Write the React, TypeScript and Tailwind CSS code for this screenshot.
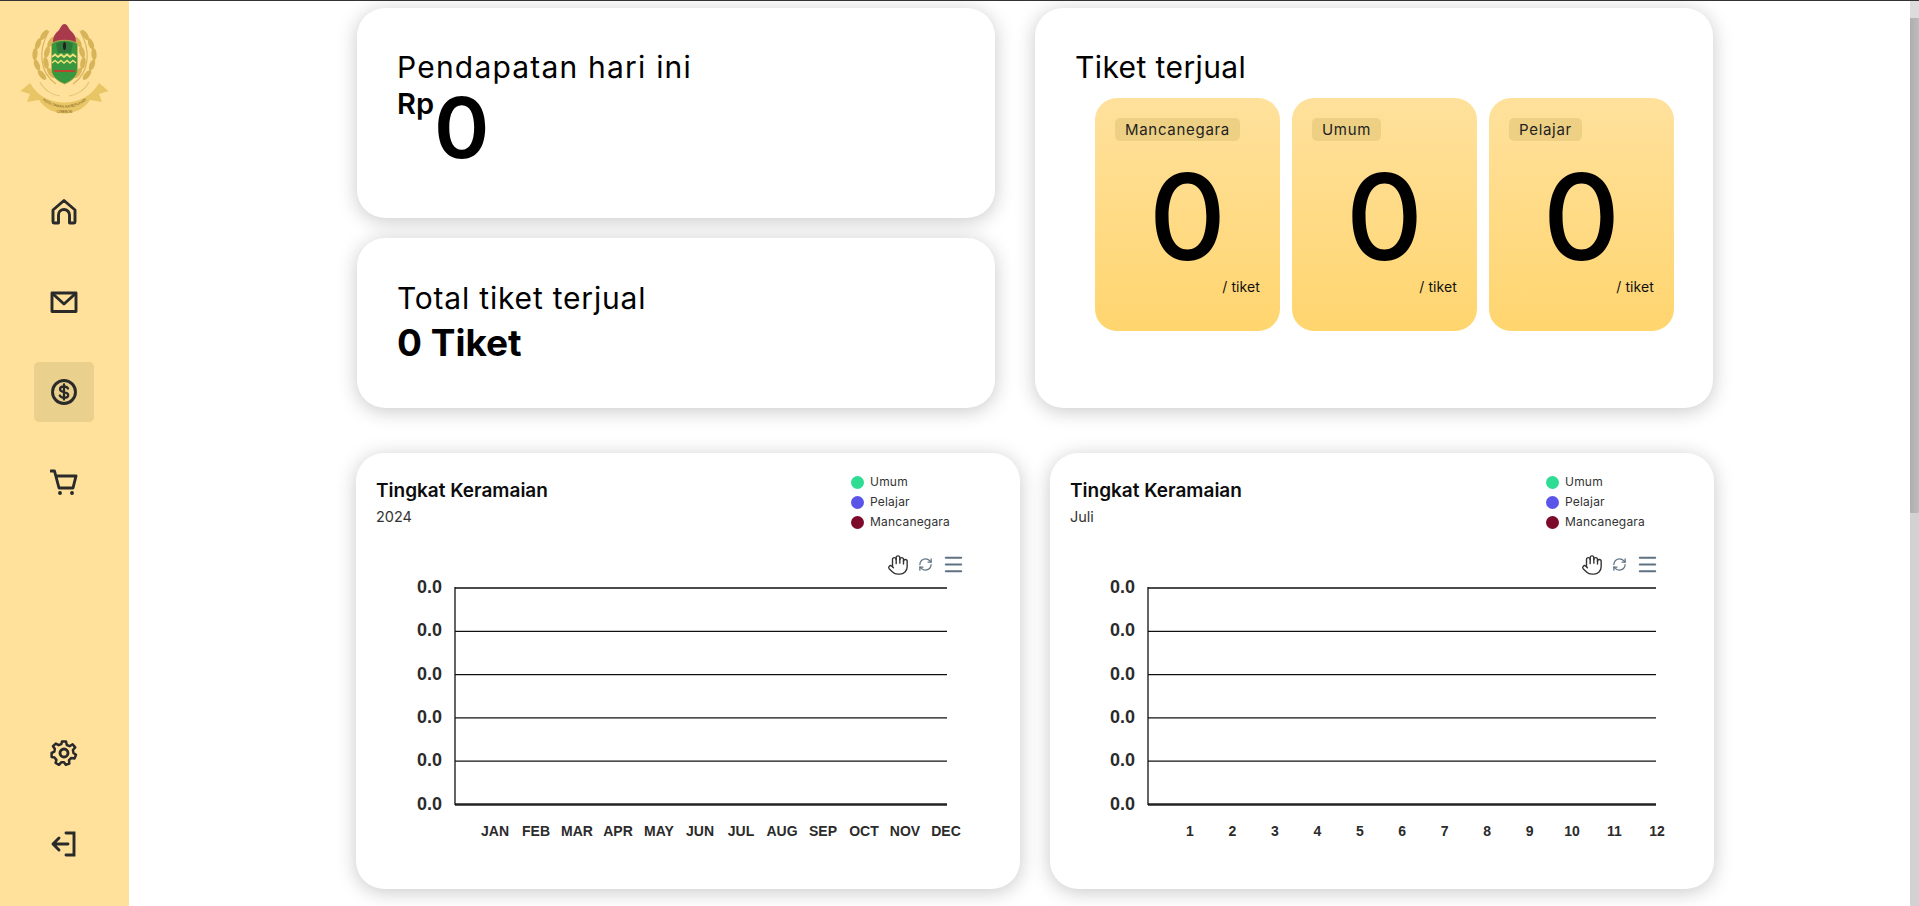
import { Hand, Menu, RefreshCw } from "lucide-react";

const tickets = ["Mancanegara", "Umum", "Pelajar"];
const legend = [
  { name: "Umum", dot: "bg-[#2fdc94]" },
  { name: "Pelajar", dot: "bg-[#5a55e8]" },
  { name: "Mancanegara", dot: "bg-[#7c0a2b]" },
];
const months = ["JAN", "FEB", "MAR", "APR", "MAY", "JUN", "JUL", "AUG", "SEP", "OCT", "NOV", "DEC"];
const days = ["1", "2", "3", "4", "5", "6", "7", "8", "9", "10", "11", "12"];

function Logo() {
  const leaves = [
    [26, 13, 35], [20, 22, 20], [17, 32, 5], [19, 43, -20], [24, 53, -40],
    [33, 20, 30], [29, 30, 15], [28, 41, -10], [33, 51, -35],
  ];
  return (
    <svg width="94" height="100" viewBox="0 0 94 100" className="block">
      {[0, 1].map((side) => (
        <g key={side} transform={side ? "translate(93 0) scale(-1 1)" : undefined}>
          {leaves.map(([x, y, r], i) => (
            <ellipse key={i} cx={x} cy={y} rx="2.6" ry="6" fill="#d8b458" transform={`rotate(${r} ${x} ${y})`} />
          ))}
          <path d="M31 9 C20 28 21 50 38 62" fill="none" stroke="#d9b65d" strokeWidth="1.2" />
          <path d="M22 60 C26 68 34 73 42 74" fill="none" stroke="#e3c878" strokeWidth="1.2" />
        </g>
      ))}
      <path d="M36 24 C33 15 38 11 41 8 C43 5 44 2 46.5 2 C49 2 50 5 52 8 C55 11 60 15 57 24 Z" fill="#a93a4c" />
      <path d="M33.5 22 C38 17 55 17 59.5 22 L59.5 48 C59.5 55 52 60 46.5 62 C41 60 33.5 55 33.5 48 Z" fill="#38973f" stroke="#c9b04d" strokeWidth="0.8" />
      <path d="M38 22 C40 19 53 19 55 22 L53 31 L40 31 Z" fill="#2f7a3a" />
      <ellipse cx="46.5" cy="24" rx="1.5" ry="4" fill="#222" />
      <path d="M34 35 l3 -2.5 l3 2.5 l3 -2.5 l3 2.5 l3 -2.5 l3 2.5 l3 -2.5 l3 2.5" fill="none" stroke="#efe07a" strokeWidth="1.8" />
      <path d="M34 41 l3 -2.5 l3 2.5 l3 -2.5 l3 2.5 l3 -2.5 l3 2.5 l3 -2.5 l3 2.5" fill="none" stroke="#efe07a" strokeWidth="1.5" />
      <rect x="36" y="48" width="21" height="2" fill="#b5482f" />
      <path d="M2.5 69 L12 61 C26 87 67 87 81 61 L90.5 69 L81 72 L84 80 L72 78 C60 96 33 96 21 78 L9 80 L12 72 Z" fill="#e9c665" />
      <path id="ribbon-text" d="M20 73 C32 90 61 90 73 73" fill="none" />
      <text fontSize="3.7" fill="#7a5620" fontFamily="Liberation Sans, sans-serif">
        <textPath href="#ribbon-text" startOffset="50%" textAnchor="middle">KOTA TAMAN KASEPUHAN</textPath>
      </text>
      <text x="46.5" y="90.5" fontSize="3.4" textAnchor="middle" fill="#7a5620" fontFamily="Liberation Sans, sans-serif">CIREBON</text>
    </svg>
  );
}

function SideIcon({ active, children }: { active?: boolean; children: React.ReactNode }) {
  return (
    <div className={`flex h-[60px] w-[60px] items-center justify-center rounded-[5px] ${active ? "bg-[#e9d08c]" : ""}`}>
      <svg width="28" height="28" viewBox="0 0 28 28" fill="none" stroke="#2a2a2a" strokeWidth="2.9" strokeLinecap="round" strokeLinejoin="round">
        {children}
      </svg>
    </div>
  );
}

function Sidebar() {
  return (
    <aside className="flex h-full w-[129px] shrink-0 flex-col items-center bg-[#ffe19c] pb-[32px] pt-[21px]">
      <Logo />
      <div className="mr-[1px] mt-[60px] flex flex-col gap-[30px]">
        <SideIcon>
          <path d="M3 12 L14 2.5 L25 12 V24 a1 1 0 0 1 -1 1 H19.5 V17 a5.5 5.5 0 0 0 -11 0 V25 H4 a1 1 0 0 1 -1 -1 Z" />
        </SideIcon>
        <SideIcon>
          <path d="M2 5 H26 V23.5 H2 Z" strokeLinecap="square" />
          <path d="M3 6 L14 16 L25 6" />
        </SideIcon>
        <SideIcon active>
          <circle cx="14" cy="14" r="11.5" />
          <path d="M18 10.5 C17.3 9 16 8.3 14 8.3 C11.6 8.3 10 9.5 10 11.2 C10 15 18.2 13 18.2 16.9 C18.2 18.6 16.4 19.7 14 19.7 C12 19.7 10.6 19 9.8 17.5 M14 6.5 V21.5" strokeWidth="2.3" />
        </SideIcon>
        <SideIcon>
          <path d="M1 3 H4.5 L9 20 H23 L26 8 H6" />
          <circle cx="10" cy="25" r="1.2" fill="#2a2a2a" strokeWidth="1.5" />
          <circle cx="22" cy="25" r="1.2" fill="#2a2a2a" strokeWidth="1.5" />
        </SideIcon>
      </div>
      <div className="mr-[1px] mt-auto flex flex-col gap-[31px]">
        <SideIcon>
          <circle cx="14" cy="14" r="4" />
          <path d="M12 2.5 H16 L16.8 6 L19.6 7.2 L22.6 5.3 L25.2 8.4 L22.9 11 L23.5 13.9 L26 15.8 L24.5 19.4 L21.3 19 L19 21.2 L19.3 24.6 L15.8 25.7 L14 23.2 L11.2 23.3 L9 25.8 L5.6 24 L6.4 20.9 L4.5 18.5 L1.6 18 L1.6 14 L4.4 12.7 L4.8 9.8 L3 7.2 L5.8 4.6 L8.7 6.2 L11.3 5.2 Z" strokeWidth="2.5" />
        </SideIcon>
        <SideIcon>
          <path d="M16 3 H24 V25 H16" strokeLinejoin="miter" />
          <path d="M18 14 H3 M9 8 L3 14 L9 20" />
        </SideIcon>
      </div>
    </aside>
  );
}

function TicketCard({ name }: { name: string }) {
  return (
    <div className="h-[233px] w-[185px] rounded-[22px] bg-gradient-to-b from-[#ffe19c] to-[#ffd56e] px-[20px] pt-[19px]">
      <span className="inline-block h-[23px] rounded-[5px] bg-[#edd083] px-[10px] text-[15px] leading-[23px] tracking-[0.7px] text-[#222]">{name}</span>
      <p className="mt-[17px] text-center text-[120px] font-medium leading-[118px] text-black">0</p>
      <p className="text-right text-[14px] leading-[22px] tracking-[0.1px] text-[#111]">/ tiket</p>
    </div>
  );
}

function Chart({ labels, axis, end, first, step, right }: { labels: string[]; axis: number; end: number; first: number; step: number; right: number }) {
  return (
    <svg width="664" height="276" className="block">
      {[0, 1, 2, 3, 4, 5].map((i) => {
        const y = 14 + i * 43.3;
        return (
          <g key={i}>
            <line x1={axis} x2={end} y1={y} y2={y} stroke={i === 5 ? "#222" : "#111"} strokeWidth={i === 5 ? 2.4 : 1.3} />
            <text x={right} y={y + 5} textAnchor="end" fontSize="18" fontWeight="700" fill="#2b2b2b" fontFamily="Liberation Sans, sans-serif">0.0</text>
          </g>
        );
      })}
      <line x1={axis} x2={axis} y1={13} y2={231} stroke="#111" strokeWidth="1.3" />
      {labels.map((label, i) => (
        <text key={label} x={first + i * step} y={262} textAnchor="middle" fontSize="14" fontWeight="700" fill="#2b2b2b" fontFamily="Liberation Sans, sans-serif">
          {label}
        </text>
      ))}
    </svg>
  );
}

function ChartCard({ subtitle, legendLeft, children }: { subtitle: string; legendLeft: string; children: React.ReactNode }) {
  return (
    <div className="h-[436px] w-[664px] rounded-[28px] bg-white pt-[19px] shadow-[0_3px_20px_rgba(0,0,0,0.22)]">
      <div className="flex h-[84px] pl-[20px]">
        <div className="w-[200px] pt-[7px]">
          <p className="text-[19px] font-semibold leading-[24px] text-[#0c0c0c]">Tingkat Keramaian</p>
          <p className="mt-[4px] text-[14.5px] leading-[20px] text-[#333]">{subtitle}</p>
        </div>
        <div className={`flex flex-col gap-[6px] pt-[3px] ${legendLeft}`}>
          {legend.map((item) => (
            <div key={item.name} className="flex h-[14px] items-center gap-[6px]">
              <span className={`h-[13px] w-[13px] rounded-full ${item.dot}`} />
              <span className="text-[12px] leading-[14px] tracking-[0.2px] text-[#333]">{item.name}</span>
            </div>
          ))}
        </div>
      </div>
      <div className="flex h-[18px] items-center justify-end gap-[6px] pb-[1px] pr-[55px]">
        <Hand size={22} strokeWidth={1.5} className="text-[#333]" />
        <RefreshCw size={15} strokeWidth={2} className="mx-[3px] text-[#5f7283]" />
        <Menu size={23} strokeWidth={2.2} className="text-[#5f7283]" />
      </div>
      {children}
    </div>
  );
}

export default function App() {
  return (
    <div className="flex h-[906px] overflow-hidden border-t border-[#333] bg-white font-[Inter,sans-serif] text-black">
      <Sidebar />
      <main className="flex-1 pl-[227px] pt-[7px]">
        <div className="ml-[1px] flex gap-[40px]">
          <div className="flex w-[638px] flex-col gap-[20px]">
            <div className="h-[210px] rounded-[28px] bg-white pl-[40px] pt-[39px] shadow-[0_3px_20px_rgba(0,0,0,0.22)]">
              <p className="text-[30px] leading-[40px] tracking-[1.2px]">Pendapatan hari ini</p>
              <div className="flex items-start">
                <span className="pt-[2px] text-[29px] font-semibold leading-[30px]">Rp</span>
                <span className="-mt-[4px] text-[84px] font-semibold leading-[90px]">0</span>
              </div>
            </div>
            <div className="h-[170px] rounded-[28px] bg-white pl-[40px] pt-[40px] shadow-[0_3px_20px_rgba(0,0,0,0.22)]">
              <p className="text-[30px] leading-[40px] tracking-[0.8px]">Total tiket terjual</p>
              <p className="mt-[2px] text-[37px] font-bold leading-[46px]">0 Tiket</p>
            </div>
          </div>
          <div className="h-[400px] w-[678px] rounded-[28px] bg-white pl-[40px] pt-[39px] shadow-[0_3px_20px_rgba(0,0,0,0.22)]">
            <p className="text-[30px] leading-[40px] tracking-[0.4px]">Tiket terjual</p>
            <div className="ml-[20px] mt-[11px] flex gap-[12px]">
              {tickets.map((name) => (
                <TicketCard key={name} name={name} />
              ))}
            </div>
          </div>
        </div>
        <div className="mt-[45px] flex gap-[30px]">
          <ChartCard subtitle="2024" legendLeft="ml-[275px]">
            <Chart labels={months} axis={99} end={591} first={139} step={41} right={86} />
          </ChartCard>
          <ChartCard subtitle="Juli" legendLeft="ml-[276px]">
            <Chart labels={days} axis={98} end={606} first={140} step={42.45} right={85} />
          </ChartCard>
        </div>
      </main>
      <div className="flex w-[9px] shrink-0 flex-col bg-[#d2d2d2]">
        <div className="h-[17px] bg-[#dcdcdc]" />
        <div className="h-[495px] rounded-[1px] bg-gradient-to-r from-[#aeaeae] to-[#bdbdbd]" />
      </div>
    </div>
  );
}
